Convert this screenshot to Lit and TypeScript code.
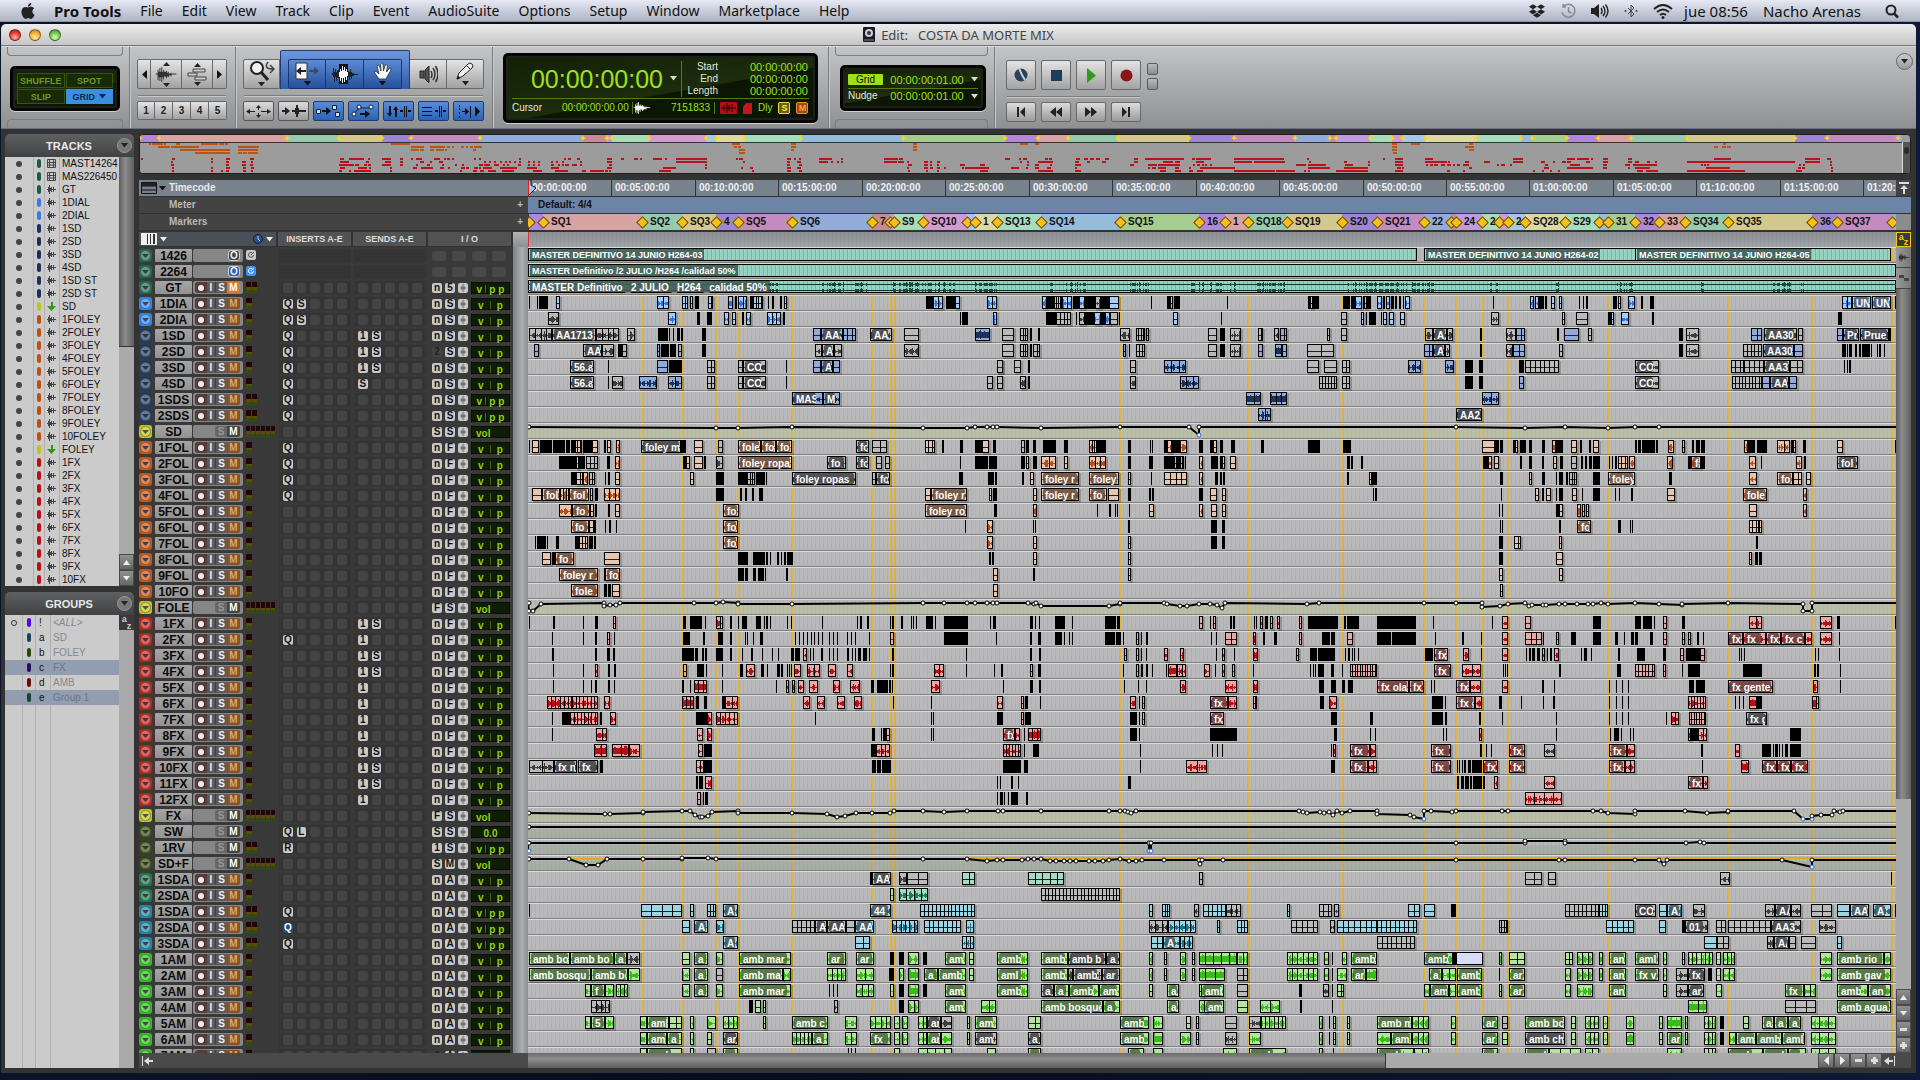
import { LitElement, html, svg, css, nothing } from "lit";
import { customElement } from "lit/decorators.js";
import { classMap } from "lit/directives/class-map.js";
import { styleMap } from "lit/directives/style-map.js";

/* ---------- session data ---------- */

/** Pixel column at which the session starts. */
const START = 528;
const END = 1896;
const FIVE_MINUTES = 83.45;

const MARKER_COLOURS = [
  "#d8a3a3", "#97cbaf", "#d3c98f", "#9e86d0", "#c48bc0", "#93abd8", "#c68c92", "#bf9be3",
  "#a8dcb8", "#d39bcf", "#a5c8ea", "#dcd9a2", "#a6dcc0", "#95bcdb", "#a6cc8f", "#b088d8",
];

const MARKERS: [number, string][] = [
  [543, "SQ1"], [642, "SQ2"], [682, "SQ3"], [716, "4"], [738, "SQ5"], [792, "SQ6"], [872, "7"], [890, ""],
  [894, "S9"], [923, "SQ10"], [967, ""], [975, "1"], [997, "SQ13"], [1041, "SQ14"], [1120, "SQ15"], [1199, "16"],
  [1225, "1"], [1248, "SQ18"], [1287, "SQ19"], [1342, "S20"], [1377, "SQ21"], [1424, "22"], [1451, ""], [1456, "24"],
  [1482, "2"], [1499, ""], [1508, "2"], [1525, "SQ28"], [1565, "S29"], [1599, ""], [1608, "31"], [1635, "32"],
  [1659, "33"], [1685, "SQ34"], [1728, "SQ35"], [1812, "36"], [1837, "SQ37"], [1892, ""],
];
const markerColour = (i: number) => MARKER_COLOURS[i % 16];

interface Track {
  name: string;
  group: string;
  kind: "video" | "audio" | "aux";
  channels: number;
  inserts: string;
  sends: string;
  io: string;
  view: string;
}

/** group colours: [button, clip tint, waveform] */
const GROUPS: Record<string, [string, string, string]> = {
  master: ["#1c6650", "#97d3c3", "#134a3c"],
  dial: ["#2b86f0", "#a9ccf6", "#2474ea"],
  sd: ["#1c3a66", "#8fabdc", "#1b3158"],
  bus: ["#c2c41e", "#c9ccb0", "#666633"],
  foley: ["#c4561a", "#e8c5ae", "#b84c12"],
  fx: ["#c21e16", "#e5aaa5", "#b80f17"],
  verb: ["#33480f", "#b5bda8", "#334411"],
  sda: ["#17794f", "#a3dcc2", "#1a7d56"],
  sdst: ["#1c87a6", "#9bd4e4", "#1d708c"],
  amb: ["#2fc21a", "#b3e5a0", "#38bd18"],
};

/** name|group|kind|channels|inserts|sends|io|view */
const TRACKS: Track[] = `1426|master|video|0||||
2264|master|video|0||||
GT|master|audio|2|||n5|
1DIA|dial|audio|1|QS||nS
2DIA|dial|audio|1|QS||nS
1SD|sd|audio|1|Q|1S|nS
2SD|sd|audio|1|Q|1S|2S
3SD|sd|audio|1|Q|1S|nS
4SD|sd|audio|1|Q|S|nS
1SDS|sd|audio|2|Q||nS
2SDS|sd|audio|2|Q||nS
SD|bus|aux|6|||SS|vol
1FOL|foley|audio|1|Q||nF
2FOL|foley|audio|1|Q||nF
3FOL|foley|audio|1|Q||nF
4FOL|foley|audio|1|Q||nF
5FOL|foley|audio|1|||nF
6FOL|foley|audio|1|||nF
7FOL|foley|audio|1|||nF
8FOL|foley|audio|1|||nF
9FOL|foley|audio|1|||nF
10FO|foley|audio|1|||nF
FOLE|bus|aux|6|||FS|vol
1FX|fx|audio|1||1S|nF
2FX|fx|audio|1|Q|1|nF
3FX|fx|audio|1||1S|nF
4FX|fx|audio|1||1S|nF
5FX|fx|audio|1||1|nF
6FX|fx|audio|1||1|nF
7FX|fx|audio|1||1|nF
8FX|fx|audio|1||1|nF
9FX|fx|audio|1||1S|nF
10FX|fx|audio|1||1S|nF
11FX|fx|audio|1||1S|nF
12FX|fx|audio|1||1|nF
FX|bus|aux|6|||FS|vol
SW|verb|aux|1|QL||SS|0.0
1RV|verb|aux|2|R||1S
SD+F|verb|aux|6|||SM|vol
1SDA|sda|audio|1|||nA
2SDA|sda|audio|1|||nA
1SDA|sdst|audio|2|Q||nA
2SDA|sdst|audio|2|q||nA
3SDA|sdst|audio|2|Q||nA
1AM|amb|audio|1|||nA
2AM|amb|audio|1|||nA
3AM|amb|audio|1|||nA
4AM|amb|audio|1|||nA
5AM|amb|audio|1|||nA
6AM|amb|audio|1|||nA
7AM|amb|audio|1|||2A`
  .split("\n")
  .map((row) => {
    const [name, group, kind, channels, inserts, sends, io, view] = row.split("|");
    return { name, group, kind, channels: +channels, inserts, sends, io, view: view ?? "" } as Track;
  });

/**
 * Clips of each lane. A lane is stored in reels divided by "#"; a reel has its own
 * origin and resolution. A clip is [type]from[-to][/parts][:label].
 *   no type: too short to show its inside, o: quiet, w: loud, g/x: the same but uncoloured,
 *   d: very loud, L/G/D: named clips, S: selected
 */
const CLIPS: Record<number, string> = {
  3: "28;51;57-84;o108-120;w411-446/2;o487-505/2;o510-519;525-537;o564-579/2;w624-640;644-650;w654-681/2;690-698;o700-728/4;745;757-762;780-787;o792-801;1218-1240;w1240-1268/2;1278-1305;o1305-1320;w1401-1431/2#w186-200;200-222;o222-245/4;w245-275/2;278-296;w296-316;316-345;x345-362;364-386;o386-416;514;561-570;o570-578;583-590;592-600;741;984-990;o990-1000;1000-1017;1089-1110;1113-1126;w1126-1146;1148-1152;o1152-1160;1160-1173;w1191-1205;o1208-1216;w1218-1230;1233-1243;o1244-1252;1258-1264;1269;w1275-1290#160;w270-283;w285-298;298-312;315-321;o333-345;o357-366;418;428;438-444;519-532;o534-543;w564-584;603-609;630-642;w1206-1236/2;L1236-1292:UNI;L1295-1352:UNI;1365",
  4: "x84-117;w444-467;531-540;561-576;w612-626;o636-648;666-671;w678-692;w741-782/3;789-795;1320;1326-1344;w1419-1431#198-228;g228-272/4;288;x297-316;316-342;w342-363;363-376;w376-390;g390-414;417;o579-594;724;g1084-1100;o1143-1152;1158;1167-1188;1204;o1208-1222;o1227-1241;o1260-1275#x153-177;o366-375;g408-444;505-512;o512-522;w543-566;636-642;1194-1206",
  5: "x27-95/4;G95-228:AA1713_;x228-296/4;x321-345;g414-420;420-444;447;458-462;470-480;484-489;546-558;o879-903;L903-968:AA3;o968-1008/3;G1050-1115:AA;g1152-1197;d1365-1409#g66-102;g120-144/3;150-156;174-180;x420-450;g468-495/4;o498-507;g684-711;720-735;x750-783;g834-848/2;x882-897;o900-921/2;g1041-1050;g1084-1101;x1335-1358;G1358-1400:AA;x1400-1419#120-126;x198-228;o228-254/2;351-357;o372-416;g444-456;717-729;x738-777;o933-966/2;G972-1070:AA30;g1074-1089;o1191-1210;L1210-1258:Pru;L1260-1346:Prue;o1346-1353",
  6: "o42-57;G189-245:AA;x245-282;294-306;g306-321;o411-420;423-447;450-468;o474-487;546-558;x885-905;G905-942:A;x942-966;x1152-1197#g66-102;g120-144/3;150-156;g160-180/2;o429-438;447;g468-495/3;g684-711;720-735;x750-783;o834-848;d885-905;o905-921;g981-1062/2;o1332-1358/2;L1358-1396:AA;x1396-1410#120-126;x198-220;o220-254/2;g357-369;717-729;x738-777;g909-965/5;L968-1062:AA30;o1062-1089;1206-1217;1220;1228-1236;1244-1252;1256-1262;1267-1290;1294;1310;1318-1324;1333",
  7: "G150-222:56.a;264;o411-444;447-486;g561-585/2;g654-668;G668-738:CO;798;o879-903;L903-940:A;o940-960;g1431-1449#g51-69;g102-123;144-150;g450-468;w552-618/3;g981-1017;g1032-1071;g1086-1110/2;w1284-1323/2;w1395-1422#75-99;117-129;237-252;g256-356/7;G585-657:CO;g873-912/3;g912-972/4;G972-1050:AA30;g1050-1089/2;1213;1221;1228-1234",
  8: "G150-222:56.a;264;x276-309;w357-411;w444-486/2;g561-585/2;g654-668;G668-738:CO;798;g1401-1419#g51-69;x120-138;144-150;x450-468;w600-657/3;g1017-1071/6;g1086-1110/2#75-99;117-129;o237-252;G585-657:CO;g876-965/9;o965-990;L990-1046:AA;o1046-1071",
  9: "L816-908:MAS;L908-960:M#d798-843/2;d870-921/3#w126-177/2",
  10: "#w834-873/2#D48-126:AA2",
  12: "28;o36-58;60-95;98-116;118-135;137-150;152-165;o165-186/3;190-216;o216-234;252-258;o261-272;w288-299;G363-484:foley m;484-498;o522-549;g594-608;L654-722:fole;L722-768:fo;L768-816:fo;G1008-1046:fo;g1057-1101/2;o1215-1245/3;1266-1272;1320-1329;1365-1386;o1386-1407;1419-1428#g123-134;137-146;159-168;189-228;252-264;w327-352/3;352-378;444-453;510;517;552-562;w562-576;576-600;w600-620;657-669;690-699;o699-711;720-729;753-765;843-852;984-997;o997-1001;1001-1020;1089-1113#o126-165;165-176;180-189;219-226;o226-234;240-258;267-276;306-315;w336-348;348-369;o393-411;420-426;446-453;o459-477;585-592;595-603;606-645;648-654;w684-702;g726-735;756-762;768-780;783-795;w912-925;925-945;950-981;w1011-1050/2;1053-1058;o1058-1068;1089-1098;o1191-1209;1365",
  13: "117-167;w167-176;178-195;g198-234/3;261-270;w285-300;489-498;o498-510;o522-549;552-558;x588-609;L654-816:foley ropa;G921-978:fo;G1008-1047:fo;g1068-1087;g1095-1110;1321;1365-1404;1407-1431#123-135;o138-147;159-171;w184-228/2;o252-264;w327-378/3;444-453;507-519;552-582;g582-590;590-600;g600-612/2;616;w657-669;693-714;720-727;o727-736;o750-768;1101-1109;1113-1119;1143-1149#129-145;w145-156;o162-177;240-246;267-276;306-312;o339-351;360-369;g393-411;423-429;435-441;447-455;459-480;508;516-520;524-530;o534-564/3;w567-585;w681-700;744-752;L752-783:fo;783-795;w927-948;964;w1068-1086;1092-1098;G1191-1254:fol",
  14: "153-168;o168-190/2;w190-204;g208-224/2;255;264-270;o285-300;o510-522;588-612;654-680;g680-706/3;708-735;739;G816-1008:foley ropas;g1057-1068;G1068-1110:fo;1317-1329;1404-1422;1425-1431#126-132;o150-162;L184-297:foley r;L327-416:foley;o444-453;514;o552-621/4;w657-669;705-714;720-726;730-736;1101-1107;o1167-1175;1175-1192#180-189;o267-276;306-315;349;357-369;378-384;g387-411/3;459-480;L505-585:foley;687-696;w927-951;L1011-1058:fo;o1058-1086/2;o1098-1113",
  15: "o36-66;L66-120:fol;w120-146/3;L146-206:fol;o210-219;225-234;w252-299/3;588-612;660-666;676-681;696-702;717-729;o1215-1232;L1232-1341:foley r;o1407-1417;1420-1431#o159-171;L184-297:foley r;L327-380:fo;o385-416;444-453;507-513;516-522;657-669;o690-711;o726-738;1179;1186-1191#183;o285-296;306-312;o318-333;348;357-369;o396-411;426;459-480;526;537;573-579;o681-704;L909-981:fole;w1089-1101",
  16: "w117-157;L157-210:fo;o210-222;225-231;264-270;o285-300;L609-657:fo;L1215-1341:foley ro;1422-1431#w159-171;351;387-393;405;411;447;o507-522;w657-669;o693-711;o726-738#178;185;348-356;o356-369;w411-422;o426-435;o438-447;o927-951;w1089-1101",
  17: "L153-206:fo;o206-222;222-228;255;267-272;288;L609-654:fo;1335;w1401-1419#160;166;444-450;693-711;726-736#180;186;357-363;L411-453:fo;534-543;570;576;o927-957/3;o957-966",
  18: "45-48;51-62;64-78;82;108-117;165-178;o178-204/3;208-219;222-228;L609-654:fo;w1401-1419#o159-171;o444-453;693-711;726-736#177-189;o222-243/2;o357-366;948-954",
  19: "o66-93;96-106;L106-161:fo;o252-299;654-684;699-735;738-744;750;771-776;783;792-797;801-819;1407-1413;1416-1422#o159-171;o444-453#177-189;o348-369;o927-936;945-953;957-966",
  20: "L117-234:foley r;252-256;L256-300:fo;654-672;675-684;699-708;714-732;736;798-804;o1419-1433#159-165;o444-453#o177-189;o357-369",
  21: "L153-234:fole;252-261;264-273;o276-300;o1419-1434##o180-189",
  23: "20;74-78;140;168-175;o208-215;365-371;381-408;415;w440-454/2;470-475;488;497-508;529-540;546-549;552-556;560;597;606;677;755;761-765;777-781;829;834-838;853-859;875;880;886;909-913;915-926;930;950-1003;1052-1055;1060-1067;1142-1150;1154;1162;1198-1221;1236;1310-1336;1338-1345;o1522-1530#22;o28-35;65-69;72-76;118;123;w131-137;141-148;g152-160;w168-175;w216-223;235-301;314-318;321-346;386-470;508;637;w658-670;o708-720;856-873;947-961;965-984;988;o1008-1017;1050-1057;w1196-1223/2;w1350-1376;1387-1394;1514",
  24: "72;140;168-172;o195-202;211;365-380;410-414;444-454;470-475;504;508;522;538-544;616;625;634;643;651;659;668;676;692;702;711;733;741;751;781;w829-837;950-1004;1066;1142-1147;1160-1166;1198-1215;1218;1230;1236;1310-1332;1334-1346;1351;w1380-1386;1390;1402-1407#24;35;o55-80/2;w115-122;137-141;161-168;w216-223;266-284;286-293;o320-333;386-416;418-470;512;o571-576;611;w658-670;o708-745/3;747;o776-782;808-819;856-873;904-910;924;938-945;947-953;981-987;o1008-1017;o1050-1056;o1063-1070;1082-1087;1096;L1151-1182:fx;L1182-1232:fx;L1232-1265:fx;L1265-1318:fx c;w1318-1333;w1350-1376;1392",
  25: "72-76;168-173;195-201;208-213;363-390;393-399;408-412;415-419;440-455;470-475;498;517-521;541;565;578;608-614;616-628;w634-642;650;656;674-679;692;702;711;733-737;743;750;757-764;768-778;781;833-838;998;1142-1147;1163-1168;o1352-1359;w1380-1386;1390;1403;w1443-1451;w1478-1487#35;w49-55;74;w115-127;o208-216;240-254;257-294;316;322-326;330;336;344;490-508;L510-540:fx;w573-586;611;w658-670;711;716-720;724-730;734-740;w745-751;756;762-766;w772-782;830;837-842;852;911-915;952-970;1008-1016;o1046-1055;1058-1090;o1090-1099;1173;1179;1185;1340;1347;1391",
  26: "74;141;w168-174;196-201;211-214;o365-373;396-413;416;453;493-500;w506-527;540-546;554;575-582;o585-590;597;602;607;w613-629;w642-672/2;w690-708;w732-747;829;834-837;w927-949/2;1000;1061;1077-1081;o1142-1148;1160-1166;1351;w1380-1386;1391-1395;1403-1407;1416;1447;d1452-1472;w1472-1491/2#w8-21;33;w47-55;w69-77;116;240;246;251;257-270;285-292;309;o327-385/11;L510-547:fx;w571-613/2;659;664;669;w782-787;908-918;o948-990/6;o1008-1016;1050;1063-1090;1183-1224;1337-1341;1344-1348;1395",
  27: "74;141;160;168-173;196-201;211;363-367;380;d389-419/3;453;574;w596-602;w609-617;w623-637;w648-667;w701-716;w739-761;787-792;799-824;827-831;834;w921-940;1082;1142-1148;o1162-1168;1352;1384;1403;w1478-1491#w55-80;w115-127;259-270;285-297;309-315;322-333;L386-455:fx ola;L455-488:fx;504;510;L558-588:fx;w588-613;w658-670;745-749;771-774;890;905;919;932;1065-1076;1080-1099;L1151-1249:fx gente;w1336-1347;1395",
  28: "w60-116/6;w116-174/7;w189-201;d363-390/3;394-401;412-418;452-460;w460-488/2;w634-650;w665-684;w710-728;w748-766;836;920;w1068-1082;o1122-1128;1132-1138;1164;w1366-1380;1387;w1393-1400#L22-62:fx;w62-80;o115-125/2;261-270;w281-298;505-529;534;L558-600:fx c;w600-614;651-658;700;746;768-773;890;905;919;932;w1063-1103/6;1166;1173;1183;d1196-1214;1214-1224;w1333-1349/2",
  29: "72;93-112;w112-174/8;180-184;w202-214;394-418;w418-429;w440-488/5;660;920;926;1068-1083;o1122-1128;1132-1145;1366-1382;1387;w1393-1399#L22-53:fx;285-298;370-377;505-529;533-538;w608-613;657;776;890;905;919;932;1014;w1025-1044/2;o1065-1103/7;G1189-1236:fx g",
  30: "72;w170-195/2;w396-411;w418-429;788-795;809;814-820;o820-828;920;926;L1082-1108:fx;w1108-1121;1130;d1138-1166/3;1366-1382;1387#22-80;292-298;371;381;530;536;w608-615;776;893;902-912;917;937;942;w1063-1070;1070-1084;w1084-1104/2;1285-1309",
  31: "d165-195/2;d206-244/2;w244-268;w399-411;413-430;787-797;w797-828/3;w1082-1122/6;1130;1149-1163;1388#27;38;47;285;w290-297;L327-370:fx;w370-384;L504-546:fx;w610-614;622-626;634;L672-707:fx;x749-774;L890-930:fx;w930-947;1091-1095;w1166-1177;1224-1244;1247;1253-1258;1262;1268;1275-1280;1284-1309",
  32: "x20-77/2;G77-127:fx n;G130-174:fx;180-186;w394-413/2;413-430;788-797;799-808;810-830;1082-1122;1129-1138;1388;w1492-1538/2#285-294;L327-366:fx;w366-385/2;L504-546:fx;559;564;571;576-580;584-590;593-614;L616-650:fx;L672-707:fx;L890-926:fx;w926-947/2;1093;d1178-1196;D1224-1256:fx;D1256-1288:fx;D1288-1324:fx",
  33: "394-399;401-410;w414-430;1069;1075;1100-1104;1116;1362-1369#560-565;568-574;577-586;588-592;595-614;o616-621;w640-650;w749-774;L1063-1096:fx;w1096-1106",
  34: "o396-405;410;415-420;1069;1076-1081;1084;1094;1100-1115;1133-1137#w708-788/4",
  39: "785-788;G788-832:AA;x848-866;g866-915/2;o989-1019/2;o1138-1218/5;g1520-1529#g708-745/2;g757-775;x1132-1155;1506;1515",
  40: "w829-837;w848-915/4;g1167-1343/22#",
  41: "20;o271-362/4;o381-390;o419-438/3;L455-488:A;L783-831:44;o896-1019/14;o1409-1417;o1438-1457/3;x1510-1522#o7-56/5;x56-89/3;o190-197;g259-287/3;x291-302;o453-480/2;o488-511;547-558;g795-870/8;o870-888/3;G948-994:CO;o1000-1018;L1018-1049:A;x1074-1099;x1230-1252;G1252-1288:AA;x1288-1308;g1331-1376/2;o1387-1415;L1415-1458:AA;L1466-1505:A;1514",
  42: "o363-380;L390-422:A;w438-456;g609-660/5;G660-688:A;G688-730:AA;g730-750;L750-792:AA;w834-892/6;o904-987/8;w1000-1018;x1408-1452/3;w1452-1514/5#o37-43;o81-105/3;g198-258/5;x284-293;o299-385/7;o385-473/9;g651-670/4;o884-946/5;o1000-1016;1050-1056;G1056-1106:01;g1124-1145/2;g1151-1243/7;G1243-1308:AA3;x1348-1386",
  43: "L455-488:A;o751-783/2;w989-1018/3;o1413-1440/2;L1440-1478:A;w1478-1508/3#g386-468/8;o1098-1125;g1125-1153/2;x1235-1250;G1250-1282:AA;g1282-1297;g1309-1341;o1387-1398",
  44: "L20-112:amb bo;L112-210:amb bo;L210-240:a;x240-268;o363-380;L390-422:a;w439-454;L490-608:amb mar;L688-730:ar;L753-792:ar;829-837;849-860;w868-893;903-911;L951-1000:am;o1006-1018;L1069-1138:amb;L1167-1228:amb;G1228-1312:amb b;G1312-1343:a;w1409-1417;o1443-1449;w1478-1491;o1506-1513;d1522-1568/2#d10-80/4;w80-105/2;w190-258/6;w269-280;287;w309-320;L328-385:amb;L488-550:amb;550-558;S558-616;w651-657;o672-707/2;o795-813/2;w821-856/3;w870-878;L890-928:am;L948-999:aml;w1008-1017;o1050-1056;w1063-1117/6;w1124-1135;w1139-1165/3;w1350-1376;L1387-1490:amb rio;w1490-1505",
  45: "L20-160:amb bosqu;L160-242:amb bo;w242-268;w363-380;L390-422:a;g439-454;L490-588:amb mar;w588-608;w688-730/4;w753-792/2;827-838;w849-860;d868-893;L904-936:a;L936-1000:amb;o1006-1018;L1069-1138:aml;L1167-1228:amb;x1228-1238;G1238-1304:amb;G1304-1343:ar;w1409-1417;o1443-1449;w1478-1491;o1506-1513;d1522-1568/2#d10-54/2;g81-105/2;w190-258/6;w269-280;287;w299-320;L328-362:ar;d362-385;L498-526:a;w526-557/2;L559-614:amb;651;L672-707:ar;w795-807;w821-856/3;w870-878;L890-928:am;L948-999:fx v;w1008-1017;x1037-1063;G1063-1099:fx;1106-1115;w1124-1135;w1139-1165/2;w1350-1376;L1387-1505:amb gav",
  46: "w146-160;L160-190:f;w190-210;w215-241/3;w363-380;L390-422:a;w439-454;L490-608:amb mar;692;702;711;w753-792/3;w829-837;849-860;d868-893;903-911;L951-1000:am;L1069-1138:amb;G1167-1196:a;L1196-1230:a;L1230-1296:amb;L1296-1343:am;o1409-1417;L1450-1477:a;o1522-1532#L2-53:amb;g81-105;216-223;x268-280;287;o299-313/2;w488-500;L500-542:am;w542-557;L559-614:amb;o651-657;L672-707:ar;w795-807;w821-856;L890-928:an;o1008-1017;x1037-1063;G1063-1097:ar;w1124-1137;L1274-1316:fx;w1316-1341/2;L1387-1455:amb;L1455-1505:an",
  47: "x160-201/4;513-522;o526-539;o544-551;x703-712;849-860;w868-893/2;L951-1000:am;w1033-1067/2;L1167-1306:amb bosque;L1306-1343:a;L1450-1477:a;w1522-1538#L8-53:am;o81-105;w131-175/2;o218-223;287;d1063-1105/2;g1274-1341/3;L1387-1505:amb agua",
  48: "w146-160;L160-190:5;w190-210;w268-284;L284-334:aml;o334-362/2;w381-390;w419-438;w455-488/3;o544-551;L609-691:amb c;w729-754;w783-832/4;w837-852;w856-868;w892-911/2;G911-942:ar;x942-967;o1002-1009;L1020-1068:am;o1138-1166/2;D1345-1408:amb;w1418-1441;o1492-1504;o1514-1521#g54-80;x106-132;w132-188/6;w259-267;282;o290-297;o320-327;L386-462:amb m;w462-498/3;w547-557;L615-650:ar;g658-670;L708-796:amb bo;o808-820;w838-868/3;w878-888;w928-946;w1000-1008;d1017-1049;w1056-1063;w1098-1124/3;1132-1142;o1183-1195;L1224-1250:a;L1250-1280:a;L1280-1308:a;w1330-1386/3",
  49: "w268-284;L284-330:am;L330-362:a;w381-390;o419-429;G455-488:ar;w609-655/5;L655-691:a;w729-754/2;L783-832:fx;w837-852;w856-868;w892-911/2;L911-944:ar;w944-967;o1002-1009;G1020-1068:am;G1138-1166:a;L1345-1408:amb;d1418-1441;w1478-1504;o1514-1521#x54-80;w106-132;w259-267;282;o290-297;o320-327;w386-415;L415-462:amb;w462-498/3;w547-557;L615-650:ar;o658-670;G708-796:amb ch;o808-820;w838-868/3;w878-888;d928-946;o1000-1008;L1017-1049:am;o1056-1063;w1098-1124/3;1132-1142;w1152-1168;L1168-1210:am;L1210-1268:amb;L1268-1318:aml;w1330-1386/3",
  50: "w268-284;L284-362:amb;w381-390;g419-438;L455-488:a;735;742;750;w837-852;w892-967/4;o1047-1067;L1138-1166:a;L1362-1398:a;w1418-1441#w50-80;L106-188:amb;w259-267;290;L386-466:amb;w466-498/2;L615-650:a;L708-760:amb;w760-830/3;w838-868/2;w1017-1049;w1098-1124/3;L1150-1226:amb;L1226-1280:amb;L1280-1320:a;w1330-1386/3",
};

interface Clip {
  type: string;
  x: number;
  w: number;
  parts: number;
  label: string;
}

const REELS: Record<number, [number, number][]> = {
  3: [[520, 3], [980, 3], [1440, 3]],
  2: [[520, 2.24], [1200, 2.178]],
};

const readLane = (source = ""): Clip[] =>
  source.split("#").flatMap((reel, i, all) => {
    if (!reel) return [];
    const [origin, scale] = REELS[all.length][i];
    const at = (v: string) => Math.round(origin + +v / scale) - START;
    return reel.split(";").map((item) => {
      const m = /^([a-zA-Z]?)(\d+)(?:-(\d+))?(?:\/(\d+))?(?::(.*))?$/.exec(item)!;
      const x = at(m[2]);
      return { type: m[1] || "k", x, w: m[3] ? Math.max(1, at(m[3]) - x) : 1, parts: +(m[4] ?? 1), label: m[5] ?? "" };
    });
  });
const LANES: Clip[][] = TRACKS.map((_, i) => readLane(CLIPS[i]));

/** Volume automation, as x,level breakpoints. */
const AUTOMATION: Record<number, string> = {
  11: "528,4 716,5 738,5 792,4 923,5 967,5 975,4 987,4 993,4 997,4 1041,5 1120,4 1189,4 1199,12 1199,4 1456,4 1525,5 1565,4 1608,5 1635,4 1659,4",
  22: "528,4 529,12 533,12 541,5 604,4 604,7 610,6 616,6 620,4 694,4 716,4 723,3 738,4 738,5 792,5 923,4 944,4 967,4 975,4 987,4 993,4 997,4 1028,4 1034,5 1036,4 1041,7 1109,7 1120,5 1120,4 1164,4 1167,5 1180,7 1187,7 1199,5 1210,5 1217,6 1222,9 1225,4 1307,5 1319,4 1424,4 1456,4 1482,4 1482,8 1500,7 1508,5 1525,4 1529,7 1532,6 1543,6 1546,6 1559,5 1565,5 1577,5 1588,5 1593,5 1601,4 1608,5 1635,4 1659,5 1682,6 1682,5 1728,4 1803,5 1803,12 1812,12 1812,4",
  35: "528,6 605,7 610,7 643,6 643,5 682,4 690,4 695,8 700,10 702,10 708,9 712,5 738,4 738,6 792,6 827,7 837,10 845,9 856,6 872,6 890,6 894,4 923,4 944,5 967,4 998,4 1003,4 1041,4 1109,4 1120,4 1125,4 1128,5 1131,6 1136,4 1299,4 1303,5 1307,6 1320,5 1324,6 1329,5 1333,8 1337,4 1342,6 1350,4 1377,4 1377,7 1410,8 1414,10 1424,12 1424,4 1431,4 1452,5 1456,4 1502,4 1508,4 1593,4 1601,4 1608,6 1635,7 1635,4 1685,4 1707,6 1728,5 1728,4 1794,4 1803,12 1812,12 1812,9 1821,8 1832,8 1834,4 1840,5 1843,4",
  36: "528,4",
  37: "528,12 528,4 1149,4 1149,12 1151,12 1151,4 1456,4 1525,4 1525,2 1565,2 1565,4 1686,4 1700,3 1704,4",
  38: "528,4 569,4 586,10 598,10 607,4 643,4 682,4 682,3 708,3 716,4 923,4 967,4 987,6 997,5 1003,5 1022,5 1028,4 1034,4 1041,4 1050,6 1056,6 1064,6 1070,6 1076,6 1089,6 1095,6 1103,6 1109,5 1120,4 1129,6 1136,6 1142,5 1164,5 1199,5 1200,9 1202,5 1223,5 1456,5 1559,5 1565,5 1635,5 1659,5 1664,9 1667,5 1782,5 1812,12 1812,5",
};

const SIDE_TRACKS: [string, string, string][] = [
  ["MAST14264", "#1c5a46", "film"], ["MAS226450", "#1c5a46", "film"], ["GT", "#1c5a46", "wave"],
  ["1DIAL", "#3a78ee", "wave"], ["2DIAL", "#3a78ee", "wave"],
  ...["1SD", "2SD", "3SD", "4SD", "1SD ST", "2SD ST"].map((n) => [n, "#1c2f5c", "wave"] as [string, string, string]),
  ["SD", "#bcc41e", "bus"],
  ...Array.from({ length: 10 }, (_, i) => [`${i + 1}FOLEY`, "#c04f14", "wave"] as [string, string, string]),
  ["FOLEY", "#bcc41e", "bus"],
  ...Array.from({ length: 10 }, (_, i) => [`${i + 1}FX`, "#bd0d14", "wave"] as [string, string, string]),
];

const MIX_GROUPS: [string, string, string][] = [
  ["!", "<ALL>", "#5a00ee"], ["a", "SD", "#17455c"], ["b", "FOLEY", "#2a4a0c"],
  ["c", "FX", "#2c0a5c"], ["d", "AMB", "#6e0808"], ["e", "Group 1", "#17452c"],
];

/* ---------- drawing helpers ---------- */

const wavePath = (x: number, w: number, middle: number, peak: number) => {
  let d = "";
  for (let i = 0; i < w; i++) {
    const n = Math.abs(Math.sin((x + i) * 12.9898) * 43758.5453) % 1;
    const h = Math.round(n * peak * Math.abs(Math.sin((i + 1) * 0.6 + x)));
    d += `M${x + i} ${middle - h}h1v${2 * h + 1}h-1z`;
  }
  return d;
};

const drawClip = (clip: Clip, group: string) => {
  const { type, x, w, parts, label } = clip;
  if (type === "k" || w < 3) return svg`<rect x=${x} y="1" width=${w} height="13" />`;
  const [, tint, strong] = GROUPS[group];
  const grey = "gxG".includes(type);
  const fill = type === "S" ? "#d9dcf8" : grey ? "#bababa" : tint;
  const ink = grey ? "#3c3c3c" : strong;
  const inner = w - 2;
  const splits = [];
  for (let i = 1; i < parts; i++) splits.push(`M${x + Math.round((w * i) / parts)} 1h1v13h-1z`);
  const labelWidth = Math.min(inner - 2, label.length * 6 + 4);
  return svg`
    <rect x=${x + 1} y="2" width=${w + 1} height="14" fill="#0003" />
    <rect x=${x} y="1" width=${w} height="13" />
    <rect x=${x + 1} y="2" width=${inner} height="11" fill=${fill} />
    ${
      type === "S"
        ? nothing
        : "dD".includes(type)
          ? svg`<path d=${wavePath(x + 1, inner, 7, 5) + `M${x + 1} 5h${inner}v6h${-inner}z`} fill=${ink} />`
          : "wxLG".includes(type)
            ? svg`<path d=${wavePath(x + 1, inner, 8, 4)} fill=${ink} />`
            : svg`<rect x=${x + 1} y="8" width=${inner} height="1" fill="#222" />`
    }
    ${splits.length ? svg`<path d=${splits.join("")} />` : nothing}
    ${
      label
        ? svg`<svg x=${x + 2} y="2" width=${labelWidth} height="12">
            <rect width="100%" height="11" rx="2" fill=${grey ? "#4a4a4aee" : `color-mix(in srgb, ${strong} 22%, #55504cdd)`} />
            <text class="clip-name" x="2" y="10">${label}</text>
          </svg>`
        : nothing
    }`;
};

const MARKER_LINES = MARKERS.map(([x]) => `M${x - START} 0h1v16h-1z`).join("");

const drawVideoClip = (from: number, to: number, name: string, labelWidth: number) => svg`
  <rect x=${from - START} y="1" width=${to - from} height="13" />
  <rect x=${from - START + 1} y="2" width=${to - from - 2} height="11" fill="#97d3c3" />
  <rect x=${from - START + 1} y="2" width=${to - from - 2} height="11" fill="url(#grid-teal)" />
  <rect x=${from - START + 2} y="2" width=${labelWidth} height="11" fill="#48675f" />
  <rect y="14" width=${END - START} height="1" fill="#c8a44c" />
  <text class="video-name" x=${from - START + 4} y="11">${name}</text>`;

const drawAutomation = (index: number) => {
  const points = AUTOMATION[index].split(" ").map((p) => p.split(",").map(Number));
  let d = "";
  points.forEach(([x, y], i) => {
    const px = x - START;
    d += i ? `L${px} ${y}` : `M${px} ${y}`;
  });
  d += `H${END - START}`;
  return svg`
    <rect y="6" width="100%" height="9" fill=${index >= 36 ? "#8c9c7c55" : "#c4cc7c4c"} />
    ${
      index === 38
        ? svg`<path d="M42 3h36v2H42zM115 2h39v2h-39zM440 2H1368v2H440z" fill="#e5a912" />`
        : nothing
    }
    <path d=${d} fill="none" stroke="#000" stroke-width="2" />
    ${points.map(
      ([x, y]) => svg`<circle cx=${x - START + (x === START ? 1 : 0)} cy=${y} r="2" fill="#fff"
        stroke=${y === 12 && index !== 22 ? "#2a5ce0" : "#000"} />`
    )}`;
};

const laneContent = (track: Track, index: number) => {
  if (index === 0)
    return svg`${drawVideoClip(528, 1417, "MASTER DEFINITIVO 14 JUNIO H264-03", 174)}
      ${drawVideoClip(1424, 1636, "MASTER DEFINITIVO 14 JUNIO H264-02", 174)}
      ${drawVideoClip(1635, 1891, "MASTER DEFINITIVO 14 JUNIO H264-05", 174)}`;
  if (index === 1) return drawVideoClip(528, 1896, "MASTER Definitivo /2 JULIO /H264 /calidad 50%", 208);
  if (index === 2) {
    const bursts: [number, number][] = [
      [770, 10], [820, 6], [826, 20], [855, 12], [893, 20], [905, 18], [925, 10], [935, 22], [975, 22], [1050, 6], [1066, 12],
      [1080, 8], [1130, 14], [1145, 4], [1190, 14], [1210, 12], [1230, 6], [1257, 28], [1348, 60], [1410, 20], [1428, 6],
      [1490, 8], [1555, 4], [1617, 16], [1700, 4], [1773, 20], [1800, 4],
    ];
    return svg`${drawVideoClip(528, 1896, "", 240)}
      <path d="M0 5h1368v1H0zM0 11h1368v1H0z" fill="#10362c" />
      <path fill="#134a3c" d=${bursts.map(([x, w]) => wavePath(x - START, w, 5, 2) + wavePath(x - START, w, 11, 2)).join("")} />
      <rect x="2" y="2" width="238" height="11" fill="#48675fcc" />
      <text class="clip-name" x="4" y="12">MASTER Definitivo _2 JULIO _H264 _calidad 50%</text>`;
  }
  if (AUTOMATION[index]) return drawAutomation(index);
  return LANES[index].map((clip) => drawClip(clip, track.group));
};

/* overview strip: the whole session, a band of eleven tracks at three pixels each */
const overviewX = (x: number) => Math.round((x - START) * 1.289);
const overview = () => {
  const bands = [];
  for (let i = 18; i <= 28; i++) {
    const d = LANES[i]
      .map((c) => {
        const w = Math.max(2, Math.round(c.w * 1.289));
        return `M${overviewX(c.x + START)} ${(i - 18) * 3}h${w}v2h${-w}z`;
      })
      .join("");
    if (d) bands.push(svg`<path d=${d} fill=${i < 22 ? "#bd5417" : "#bb1219"} />`);
  }
  return bands;
};

const icon = (w: number, h: number, body: unknown) =>
  html`<svg class="icon" width=${w} height=${h} viewBox="0 0 ${w} ${h}" aria-hidden="true">${body}</svg>`;

const waveIcon = (fill: string, w = 22, h = 16) => html`<svg class="icon" width=${w} height=${h} viewBox="0 0 22 16" aria-hidden="true">
  <path fill=${fill} d="M0 7h2V3h1v2h1V1h1v4h1V0h1v5h1V3h1v2h2V4h1v2h1V5h1v2h2V6h1v1h5v1h-5v2h-1V9h-2v2h-1v-1h-1v2h-1v-2H9v3H8v-2H7v5H6v-5H5v4H4v-4H3v3H2V8H0z" />
</svg>`;
const down = (fill = "#222") => icon(7, 5, svg`<path d="M0 0h7L3.500 4.500z" fill=${fill} />`);

@customElement("app-root")
export class AppRoot extends LitElement {
  static styles = css`
    :host {
      display: block;
      font-family: "Liberation Sans", Arial, sans-serif;
      font-size: 10px;
      line-height: 12px;
      color: #ddd;
    }
    * { box-sizing: border-box; }
    button {
      font: inherit;
      color: inherit;
      padding: 0;
      margin: 0;
      border: 0;
      background: none;
      display: inline-flex;
      align-items: center;
      justify-content: center;
    }
    ul { list-style: none; margin: 0; padding: 0; }
    h1, h2 { margin: 0; font-size: inherit; font-weight: inherit; }
    svg { display: block; }
    .icon { flex: none; }
    .defs { position: absolute; }
    .desktop {
      height: 100vh;
      display: flex;
      flex-direction: column;
      background:
        radial-gradient(circle, #9fb4d8 0 1px, #0000 1px) 40px 4px / 173px 61px,
        radial-gradient(circle, #5c7198 0 1px, #0000 1px) 11px 29px / 97px 43px,
        linear-gradient(90deg, #0c1428, #070c1c 40%, #0e1a38);
      overflow: hidden;
    }

    /* system menu */
    .menubar {
      height: 22px;
      flex: none;
      display: flex;
      align-items: center;
      padding: 0 20px;
      background: linear-gradient(#e6e9f3, #c9cedc 50%, #b0b5c4);
      border-bottom: 1px solid #8d92a2;
      font-family: "Noto Sans", "Open Sans", sans-serif;
      font-size: 14px;
      line-height: 20px;
      color: #111;
    }
    .menus { display: flex; align-items: center; gap: 19px; margin-left: 18px; }
    .menus .app { font-size: 15px; font-weight: 700; }
    .status { margin-left: auto; display: flex; align-items: center; gap: 15px; font-size: 15px; }
    .status .clock { margin-left: -4px; }

    /* window */
    .window {
      flex: 1;
      min-height: 0;
      margin: 2px 4px 7px 1px;
      display: flex;
      flex-direction: column;
      background: #333;
      border-radius: 5px 5px 0 0;
      overflow: hidden;
    }
    .titlebar {
      height: 22px;
      flex: none;
      display: grid;
      grid-template-columns: 1fr auto 1fr;
      align-items: center;
      background: linear-gradient(#ececec, #c6c6c6);
      border-bottom: 1px solid #777;
      font-family: "Noto Sans", "Open Sans", sans-serif;
      font-size: 13px;
      line-height: 18px;
      color: #444;
    }
    .lights { display: flex; gap: 8px; padding-left: 8px; }
    .light { width: 12px; height: 12px; border-radius: 50%; border: 1px solid #0006; }
    .light.red { background: radial-gradient(circle at 50% 75%, #ffb0a5, #e0342c 60%, #8c1a16); }
    .light.amber { background: radial-gradient(circle at 50% 75%, #fff0a0, #f0a82c 60%, #9c6414); }
    .light.green { background: radial-gradient(circle at 50% 75%, #d8ffb0, #6cc048 60%, #33701c); }
    .title { display: flex; align-items: center; gap: 6px; }
    .title span { white-space: pre; }

    /* toolbar */
    .toolbar {
      height: 83px;
      flex: none;
      display: flex;
      background: linear-gradient(#c3c4c6, #a6a7a9 55%, #8f9092);
      border-top: 1px solid #d8d8e4;
      border-bottom: 1px solid #6d6f84;
    }
    .cluster {
      border-right: 1px solid #7c7d80;
      box-shadow: 1px 0 #c8c8ca;
      display: flex;
      flex-direction: column;
      flex: none;
    }
    .cluster.padded { padding: 12px 8px 0 7px; }
    .tab { height: 9px; margin: 0 6px; border: 1px solid #7c7d80; border-top: 0; border-radius: 0 0 4px 4px; }
    .tab.low { border-top: 1px solid #7c7d80; border-bottom: 0; border-radius: 4px 4px 0 0; margin-top: auto; }
    .rule { height: 1px; background: #7a7b7d; box-shadow: 0 1px #c8c8c8; margin: 6px 1px 5px; }
    .row { display: flex; }
    .lcd {
      border: 3px solid #050505;
      border-radius: 5px;
      background: linear-gradient(170deg, #122005, #1d2c0d 55%, #0c1703 56%, #0a1402);
      box-shadow: inset 0 0 0 2px #1d1f19, 0 1px #d0d0d0;
      color: #9ee01b;
    }
    .modes {
      width: 110px;
      height: 45px;
      margin: 10px 9px 0;
      padding: 4px;
      display: grid;
      grid-template-columns: 1fr 1fr;
      gap: 1px;
      font-size: 9px;
      font-weight: 700;
    }
    .mode { border: 1px solid #35540d; background: #182a07; color: #6d9c1d; }
    .mode.on { background: #3c8ee0; color: #0b2a52; border-color: #3c8ee0; gap: 4px; }
    .key {
      height: 30px;
      background: linear-gradient(#e4e4e4, #a2a2a2);
      border: 1px solid #68696b;
      border-left-width: 0;
      color: #222;
      flex-direction: column;
      gap: 1px;
    }
    .key:first-child { border-left-width: 1px; border-radius: 2px 0 0 2px; }
    .key:last-child { border-radius: 0 2px 2px 0; }
    .key.arrow { width: 14px; }
    .key.zoom { width: 31px; }
    .key.preset { width: 18px; height: 19px; font-weight: 700; }
    .key.tool { width: 37px; }
    .smart {
      height: 39px;
      margin-top: -9px;
      padding: 8px 7px 0;
      display: flex;
      background: linear-gradient(#6f97dc, #2e5aa8);
      border: 1px solid #1f3c78;
      border-bottom: 0;
      border-radius: 2px 2px 0 0;
    }
    .smart .key { width: 38px; background: linear-gradient(#5c8ad4, #24509c); border-color: #19376c; }
    .minis { display: flex; gap: 4px; }
    .mini {
      width: 31px;
      height: 20px;
      border: 1px solid #55565a;
      border-radius: 2px;
      background: linear-gradient(#dcdcdc, #9a9a9a);
    }
    .mini.on { background: linear-gradient(#5c8cd8, #2b62b4); border-color: #1c3c74; }
    .counter {
      width: 315px;
      height: 70px;
      margin: 6px 10px 0;
      padding: 3px 6px;
      display: flex;
      flex-direction: column;
    }
    .counter .upper { flex: 1; display: flex; border-bottom: 1px solid #567a14; }
    .big { flex: 1; display: flex; align-items: center; justify-content: flex-end; gap: 7px; padding-right: 4px; font-size: 25px; line-height: 30px; }
    .select { width: 128px; margin: 2px 0 1px; padding-right: 1px; border-left: 1px solid #567a14; display: grid; grid-template-columns: 36px 1fr; align-content: space-between; }
    .select span { text-align: right; color: #e4e8dc; }
    .select output { text-align: right; font-size: 11px; }
    .lower { height: 18px; display: flex; align-items: center; }
    .lower .name { color: #e4e8dc; width: 50px; }
    .lower .pos { width: 71px; border-right: 1px solid #567a14; }
    .lower .samples { width: 64px; text-align: right; padding-right: 4px; border-right: 1px solid #567a14; margin-right: 5px; }
    .lower .row { gap: 6px; align-items: center; }
    .badge { width: 12px; height: 12px; border-radius: 2px; font-weight: 700; font-size: 9px; border: 1px solid #f0d83c; background: #6b6011; color: #f8e858; }
    .badge.mute { border-color: #f08a2c; background: #a04c10; color: #f8a050; }
    .grid-box { width: 146px; height: 46px; margin: 9px 8px 0 11px; padding: 4px 5px; display: flex; flex-direction: column; }
    .grid-box div { flex: 1; display: flex; align-items: center; justify-content: space-between; }
    .grid-box div:first-child { border-bottom: 1px solid #567a14; }
    .grid-box .tag { width: 35px; height: 11px; border-radius: 1px; background: #9ee01b; color: #111; }
    .grid-box .plain { width: 35px; color: #e4e8dc; }
    .grid-box output { font-size: 11px; }
    .transport { display: grid; grid-template-columns: repeat(4, 30px) 12px; column-gap: 5px; padding: 13px 11px 0; align-content: start; flex: 1; border: 0; }
    .transport .wide { grid-column: 1 / 5; }
    .transport .key, .transport .mini { border: 1px solid #68696b; border-radius: 2px; width: 30px; }
    .leds { display: flex; flex-direction: column; justify-content: space-between; padding: 3px 0 0 1px; }
    .led { width: 11px; height: 12px; border: 1px solid #58595b; border-radius: 2px; background: linear-gradient(#bbb, #8b8b8b); }
    .round { border-radius: 50%; width: 17px; height: 17px; border: 1px solid #666; background: linear-gradient(#ccc, #999); flex: none; }
    .toolbar > .round { margin: 6px 3px 0; }

    /* body */
    .body { flex: 1; min-height: 0; display: flex; padding: 5px 5px 5px 4px; gap: 5px; }
    .side { width: 129px; flex: none; display: flex; flex-direction: column; gap: 6px; }
    .panel { display: flex; flex-direction: column; }
    .panel.fill { flex: 1; min-height: 0; }
    .panel-head {
      height: 23px;
      display: flex;
      align-items: center;
      padding: 0 2px 0 16px;
      background: linear-gradient(#5e6062, #3f4143);
      border-radius: 5px 5px 0 0;
      font-size: 11px;
      font-weight: 700;
      color: #e8e8e8;
    }
    .panel-head h2 { flex: 1; text-align: center; }
    .panel-head .round { width: 15px; height: 15px; background: #777; border-color: #999; }
    .panel-body { display: flex; flex: 1; min-height: 0; }
    .list { width: 114px; color: #111; background: linear-gradient(90deg, #cbcbcb 28px, #b0b0b0 28px 29px, #cbcbcb 29px 39px, #b0b0b0 39px 40px, #cbcbcb 40px 54px, #b0b0b0 54px 55px, #cbcbcb 55px); }
    .list li { height: 13px; display: flex; align-items: center; }
    .dot { width: 6px; height: 6px; border-radius: 50%; background: #444; margin: 0 15px 0 11px; }
    .chip { width: 4px; height: 9px; border-radius: 2px; margin-right: 6px; }
    .list .icon { margin-right: 6px; }
    .list.groups { background: linear-gradient(90deg, #cbcbcb 17px, #b0b0b0 17px 18px, #cbcbcb 18px 30px, #b0b0b0 30px 31px, #cbcbcb 31px 45px, #b0b0b0 45px 46px, #cbcbcb 46px); flex: none; }
    .list.groups li { height: 15px; color: #888; }
    .list.groups .on { background: #929db0; color: #6d7686; }
    .all { width: 6px; height: 6px; border: 1px solid #333; border-radius: 50%; }
    .hide { width: 22px; padding-left: 6px; display: flex; }
    .key-id { width: 14px; color: #111; }
    .groups .chip { margin-right: 8px; }
    .italic { font-style: italic; }
    .vbar { width: 15px; display: flex; flex-direction: column; background: #aaa; }
    .thumb { background: linear-gradient(90deg, #5c5c5c, #8c8c8c 40%, #5f5f5f); }
    .side .thumb { height: 190px; border-bottom: 1px solid #333; }
    .step { width: 15px; height: 16px; background: linear-gradient(#909090, #666); border: 1px solid #4a4a4a; flex: none; }
    .vbar .space { flex: 1; }
    .az { width: 15px; height: 15px; background: #3a3a3a; color: #ccc; font-weight: 700; font-size: 9px; line-height: 8px; flex: none; }
    .az span:first-child { align-self: flex-start; }
    .az span:last-child { align-self: flex-end; }
    .az.on { border: 1px solid #f0c818; color: #f0c818; }

    .edit { flex: 1; min-width: 0; display: flex; flex-direction: column; }
    .overview { height: 40px; flex: none; display: flex; border: 1px solid #1e1e1e; border-radius: 4px; overflow: hidden; background: #9c9c9c; }
    .overview .picture { flex: 1; min-width: 0; overflow: hidden; }
    .overview .scroll { width: 8px; background: #555; border-left: 1px solid #ddd; margin-top: 7px; padding: 5px 1px; }
    .overview .scroll i { display: block; height: 7px; background: #2c2c2c; border-radius: 3px; }
    .rulers { flex: none; margin-top: 6px; display: flex; flex-direction: column; gap: 1px; }
    .ruler { height: 16px; display: grid; grid-template-columns: 389px 1fr 15px; font-weight: 700; line-height: 16px; }
    .ruler .label { display: flex; align-items: center; justify-content: space-between; background: #434343; color: #b8b8b8; padding: 0 5px 0 30px; }
    .ruler .label.active { background: #78828d; color: #e8e8e8; padding-left: 2px; justify-content: flex-start; gap: 2px; }
    .ruler .label.jump { padding: 0; justify-content: center; }
    .label.active b { margin-left: 1px; }
    .strip { position: relative; overflow: hidden; min-width: 0; }
    .strip.time { background: #78828d; }
    .strip.meter { background: #6b84a8; color: #111; padding-left: 10px; }
    .strip.tail { background: #8c8c8c; }
    .tick { position: absolute; top: 0; bottom: 0; border-left: 1px solid #333; padding-left: 3px; color: #f0f0f0; }
    .playhead { position: absolute; left: 0; top: 0; border: 0; }
    .marker { position: absolute; top: 0; bottom: 0; color: #111; padding-left: 8px; white-space: nowrap; }
    .marker::before { content: ""; position: absolute; left: -4px; top: 4px; width: 7px; height: 7px; background: #f5bf1c; border: 1px solid #604404; transform: rotate(45deg); }

    .workspace { flex: 1; min-height: 0; display: grid; grid-template-columns: 1fr 15px; margin-top: 2px; }
    .tracks { display: flex; flex-direction: column; min-height: 0; min-width: 0; overflow: hidden; }
    .columns { height: 15px; flex: none; display: grid; grid-template-columns: 139px 75px 75px 85px 15px 1fr; font-size: 9px; font-weight: 700; text-align: center; line-height: 14px; }
    .columns > * { background: #525252; margin-right: 2px; height: 14px; }
    .columns .gutter, .columns .ghost { margin: 0; height: 15px; background: linear-gradient(#b0b2b4, #8c8e90); }
    .columns .ghost { background: repeating-linear-gradient(90deg, #0000 0 3px, #7c889455 3px 4px), linear-gradient(#8c8d90, #a3a4a8); border-left: 1px solid #d33; }
    .columns .view { background: #4a5057; display: flex; align-items: center; padding: 0 3px 0 2px; gap: 3px; }
    .view .late { margin-left: auto; }
    .rows { flex: 1; min-height: 0; overflow: hidden; }
    .track { height: 16px; display: grid; grid-template-columns: 374px 15px 1fr; }
    .head { display: grid; grid-template-columns: 13px 41px 50px 35px 75px 75px 85px; padding: 2px 0 1px; background: #393939; border-bottom: 1px solid #2e2e2e; }
    .head > * { height: 13px; }
    .pick { border-radius: 3px; background: var(--pick); }
    .pick i { width: 11px; height: 11px; border-radius: 50%; background: #fff5; border: 1px solid #0005; display: flex; align-items: center; justify-content: center; }
    .plate { margin: 0 1px 0 3px; background: linear-gradient(#a6a6a6, #929292); color: #0a0a0a; font-size: 12px; font-weight: 700; text-align: center; line-height: 14px; border-radius: 1px; overflow: hidden; white-space: nowrap; }
    .states { background: #868686; display: flex; align-items: center; justify-content: flex-end; padding: 0 3px 0 1px; border-radius: 2px; font-weight: 700; color: #f0f0f0; }
    .state { height: 11px; background: #5c5a58; }
    .state.rec { width: 12px; background: #573c3c; border-radius: 3px 0 0 3px; }
    .state.rec i { width: 6px; height: 6px; border-radius: 50%; background: #eee; }
    .state.in { width: 9px; border-right: 1px solid #3c3c3c; }
    .state.solo { width: 11px; }
    .state.mute { width: 13px; background: #8a5020; color: #d5a878; border-radius: 0 2px 2px 0; }
    .state.mute.lit { background: #e0782c; color: #fff; }
    .aux .state.solo { width: 12px; color: #999; background: #666; border-radius: 3px 0 0 3px; }
    .aux .state.mute { background: #444; color: #fff; }
    .state.online { width: 12px; border: 1px solid #ccc; background: #444; border-radius: 3px; }
    .state.online.lit { background: #2a5cb0; }
    .meters { display: flex; gap: 1px; padding: 0 0 1px 3px; align-items: center; }
    .meters i { width: 4px; height: 11px; background: linear-gradient(#240404 50%, #5c4a08 50% 70%, #2f4c0c 70%); }
    .meters.one i { width: 6px; }
    .meters.two i { width: 5px; }
    .slots { display: flex; gap: 4px; padding: 0 4px; align-items: center; background: #343434; margin: 0 2px 0 1px; }
    .slot { width: 10px; height: 10px; border-radius: 2px; background: #444; font-weight: 700; line-height: 10px; color: #111; }
    .slot.set { background: #c8c8c8; }
    .slot.off { background: #1c4a78; color: #fff; }
    .io { display: flex; gap: 3px; align-items: center; padding-left: 4px; }
    .io .slot.dim { background: #444; color: #222; }
    .io .slot.blank { width: 14px; background: #484848; margin-right: 3px; }
    .value { width: 39px; height: 12px; background: #0f1d07; border: 1px solid #0a0f06; color: #8cd01c; font-weight: 700; line-height: 13px; display: flex; justify-content: space-around; padding: 0 3px; }
    .value.text { justify-content: flex-start; padding-left: 4px; }
    .value i { width: 1px; height: 8px; margin-top: 2px; background: #456618; }
    .gutter-cell { background: linear-gradient(90deg, #7c7e80, #acaeb0 60%, #8c8e90); border-bottom: 1px solid #5c5e60; }
    .lane { width: 100%; height: 16px; background: repeating-linear-gradient(90deg, #b9b9bb 0 3px, #abb0b7 3px 4px); }
    .clip-name { font: 700 10px "Liberation Sans", Arial, sans-serif; fill: #fff; }
    .video-name { font: 700 9px "Liberation Sans", Arial, sans-serif; fill: #fff; }
    .workspace .vbar .thumb { flex: 510; }
    .workspace .vbar .space { flex: 190; }
    .ruler-step { height: 21px; background: linear-gradient(90deg, #999, #777); border-bottom: 1px solid #444; flex: none; }

    .bottom { height: 15px; flex: none; display: flex; background: #4a4a4a; }
    .home { width: 389px; padding-left: 3px; display: flex; align-items: center; }
    .hbar { flex: 1; display: flex; background: #aaa; }
    .hbar i { width: 66.5%; background: linear-gradient(#6c6c6c, #8c8c8c 40%, #5c5c5c); border-right: 1px solid #333; }
    .bottom .step { height: 15px; width: 16px; }
    .bottom .step.end { width: 29px; background: none; border: 0; justify-content: flex-start; padding-left: 2px; }
  `;

  private menubar() {
    const menus = ["File", "Edit", "View", "Track", "Clip", "Event", "AudioSuite", "Options", "Setup", "Window", "Marketplace", "Help"];
    return html`<header class="menubar">
      <svg class="icon" width="16" height="18" viewBox="0 0 24 24" aria-hidden="true"><path fill="#222" d="M12.152 6.896c-.948 0-2.415-1.078-3.960-1.040-2.040.027-3.910 1.183-4.961 3.014-2.117 3.675-.546 9.103 1.519 12.090 1.013 1.454 2.208 3.090 3.792 3.039 1.520-.065 2.090-.987 3.935-.987 1.831 0 2.350.987 3.960.948 1.637-.026 2.676-1.480 3.676-2.948 1.156-1.688 1.636-3.325 1.662-3.415-.039-.013-3.182-1.221-3.220-4.857-.026-3.040 2.480-4.494 2.597-4.559-1.429-2.090-3.623-2.324-4.390-2.376-2-.156-3.675 1.090-4.610 1.090zM15.530 3.830c.843-1.012 1.400-2.427 1.245-3.830-1.207.052-2.662.805-3.532 1.818-.780.896-1.454 2.338-1.273 3.714 1.338.104 2.715-.688 3.559-1.701" /></svg>
      <nav class="menus">
        <button class="app">Pro Tools</button>
        ${menus.map((m) => html`<button>${m}</button>`)}
      </nav>
      <div class="status">
        <svg class="icon" width="16" height="16" viewBox="0 0 24 24" aria-hidden="true"><path fill="#222" d="M6 1.807L0 5.629l6 3.822 6.001-3.822L6 1.807zM18 1.807l-6 3.822 6 3.822 6-3.822-6-3.822zM0 13.274l6 3.822 6.001-3.822L6 9.452l-6 3.822zM18 9.452l-6 3.822 6 3.822 6-3.822-6-3.822zM6 18.371l6.001 3.822 6-3.822-6-3.822L6 18.371z" /></svg>
        ${icon(16, 16, svg`<path d="M3 4a6.500 6.500 0 1 1-1 5M3 1v3h3M8.500 4v4.500l3 1.500" fill="none" stroke="#858a98" stroke-width="1.500" />`)}
        ${icon(18, 16, svg`<path d="M0 5h3l5-4v14l-5-4H0z" fill="#222" /><path d="M10 5q2 3 0 6M12 3q4 5 0 10M14.500 1.500q5 6.500 0 13" fill="none" stroke="#222" stroke-width="1.400" />`)}
        ${icon(14, 16, svg`<path d="M4 5l6 6-3 3V2l3 3-6 6" fill="none" stroke="#444" /><circle cx="1.500" cy="8" r="1" fill="#444" /><circle cx="12.500" cy="8" r="1" fill="#444" />`)}
        ${icon(20, 16, svg`<path d="M1 6q9-8 18 0M4 9q6-5 12 0M7 12q3-2.500 6 0" fill="none" stroke="#222" stroke-width="2" /><circle cx="10" cy="14.500" r="1.500" fill="#222" />`)}
        <time class="clock">jue 08:56</time>
        <span>Nacho Arenas</span>
        <button aria-label="Search">${icon(24, 16, svg`<circle cx="15" cy="7" r="4.500" fill="none" stroke="#222" stroke-width="2" /><path d="M18 10.500l4 4" stroke="#222" stroke-width="2.500" />`)}</button>
      </div>
    </header>`;
  }

  private modeCluster() {
    return html`<div class="cluster">
      <div class="tab"></div>
      <div class="lcd modes">
        <button class="mode">SHUFFLE</button><button class="mode">SPOT</button>
        <button class="mode">SLIP</button><button class="mode on">GRID ${down("#0b2a52")}</button>
      </div>
      <div class="tab low"></div>
    </div>`;
  }

  private zoomCluster() {
    const up = icon(7, 4, svg`<path d="M0 4h7L3.500 0z" fill="#222" />`);
    const low = icon(7, 4, svg`<path d="M0 0h7L3.500 4z" fill="#222" />`);
    return html`<div class="cluster padded">
      <div class="row">
        <button class="key arrow" aria-label="Zoom out">${icon(5, 9, svg`<path d="M5 0v9L0 4.500z" fill="#111" />`)}</button>
        <button class="key zoom" aria-label="Audio zoom">${up}${waveIcon("#333", 22, 15)}${low}</button>
        <button class="key zoom" aria-label="MIDI zoom">${up}${icon(20, 13, svg`<path d="M6 1h12v3H6zM1 5h9v3H1zM8 9h11v3H8z" fill="#ccc" stroke="#444" />`)}${low}</button>
        <button class="key arrow" aria-label="Zoom in">${icon(5, 9, svg`<path d="M0 0v9l5-4.500z" fill="#111" />`)}</button>
      </div>
      <div class="rule"></div>
      <div class="row">${[1, 2, 3, 4, 5].map((n) => html`<button class="key preset">${n}</button>`)}</div>
    </div>`;
  }

  private toolCluster() {
    const minis = [
      svg`<path d="M1 8.500h8M15 8.500h8M12.500 4v3M12.500 10v3" stroke="#222" /><path d="M4 6L0 8.500 4 11zM21 6l4 2.500L21 11zM10 5l2.500-3L15 5zM10 12l2.500 3 2.500-3z" fill="#222" />`,
      svg`<path d="M1 7h3V4l5 4-5 4V9H1zM11 7h3V5h1V2h2v3h1v2h7v2h-7v2h-1v3h-2v-3h-1V9h-3z" fill="#222" />`,
      svg`<path d="M.500 6.500h4v4h-4zM16.500 2.500h4v4h-4zM19.500 9.500h4v4h-4z" fill="#cfe0f8" stroke="#123" /><path d="M6 7h4V4l5 4-5 4V9H6z" fill="#111" />`,
      svg`<path d="M3 11L8 5h13" fill="none" stroke="#123" /><circle cx="3" cy="11" r="2" fill="#fff" stroke="#123" /><circle cx="8" cy="4" r="2" fill="#fff" stroke="#123" /><circle cx="20" cy="4" r="2" fill="#fff" stroke="#123" /><path d="M9 10h5V7l5 4-5 4v-3H9z" fill="#111" />`,
      svg`<path d="M3 3v7H1l3 4 2-4H5V3zM9 14V7H7l3-4 2 4h-1v7zM18 3h1v11h-1zM20 3h1v11h-1zM14 7h3v2h-3zM22 7h3v2h-3z" fill="#111" />`,
      svg`<path d="M1 4h10v1H1zM1 8h10v1H1zM1 12h10v1H1zM18 3h1v11h-1zM20 3h1v11h-1zM14 7h3v2h-3zM22 7h3v2h-3z" fill="#111" />`,
      svg`<path d="M3 2h1v2H3zM3 5h1v2H3zM3 9h1v2H3zM3 13h1v2H3zM6 8h3V5l4 3.500L9 12V9H6zM14 3h1v12h-1zM19 3l5 5.500-5 5.500z" fill="#111" />`,
    ];
    const names = ["Zoom toggle", "Tab to transients", "Link timeline and edit selection", "Link track and edit selection", "Mirrored MIDI editing", "Automation follows edit", "Insertion follows playback"];
    return html`<div class="cluster padded">
      <div class="row">
        <button class="key tool" aria-label="Zoomer">${icon(28, 20, svg`<circle cx="9" cy="7" r="6" fill="#f0f0f0" stroke="#222" stroke-width="2" /><path d="M13 11l7 8" stroke="#222" stroke-width="3" /><path d="M20 1q-5 7 5 7M22 4l4 4-4 4" fill="none" stroke="#444" stroke-width="1.500" />`)}${down()}</button>
        <div class="smart">
          <button class="key tool" aria-label="Trim">${icon(26, 18, svg`<path d="M2 1h11v16H2z" fill="#f6f6f6" stroke="#333" /><path d="M12 8H7V5L2 9l5 4v-3h5z" fill="#222" /><path d="M15 8h5V5l5 4-5 4v-3h-5z" fill="#3c4a60" />`)}${down("#111")}</button>
          <button class="key tool" aria-label="Selector">${icon(28, 22, svg`<path d="M8 1h9v20H8z" fill="#111" /><path d="M1 10h1V5h1v4h1V6h1v3h1V7h2v8H6v3H5v-4H4v5H3v-5H2v-2H1zM17 8h1v1h1V6h1v3h1v1h2v1h4v1h-4v1h-2v3h-1v-2h-1v3h-1v-3h-1z" fill="#222" /><path d="M8 9h1V6h1v2h1V3h1v4h1V4h1v4h1V6h1v3h1v4h-1v4h-1v-3h-1v5h-1v-4h-1v5h-1v-5h-1v3H9v-4H8z" fill="#fff" />`)}</button>
          <button class="key tool" aria-label="Grabber">${icon(20, 18, svg`<path d="M6 17L1 10q0-2 3 0l2 2-2-8q1-2 2.500 0l1.500 5-.500-7q1-2 2.500 0l.500 7 1.500-6q2-1 2.500 1l-1 6 3-4q2 0 1.500 2l-4 7-1 2z" fill="#fff" stroke="#345" />`)}${down("#111")}</button>
        </div>
        <button class="key tool" aria-label="Scrubber">${icon(20, 20, svg`<path d="M2 7h4v7H2zM7 6l4-4v17l-4-4z" fill="#555" stroke="#222" /><path d="M13 7q2 3.500 0 7M15 4q4 6 0 12M17.500 2q5 8 0 16" fill="none" stroke="#333" stroke-width="1.500" />`)}</button>
        <button class="key tool" aria-label="Pencil">${icon(20, 18, svg`<path d="M2 17l2-6L13 2q2-2 4 0t0 4L8 14z" fill="#f2f2f2" stroke="#222" /><path d="M2 17l1-3 2 2z" fill="#222" stroke="#222" /><path d="M12 4l3 3" stroke="#222" />`)}${down()}</button>
      </div>
      <div class="rule"></div>
      <div class="minis">${minis.map((m, i) => html`<button class=${classMap({ mini: true, on: i > 1 })} aria-label=${names[i]}>${icon(25, 16, m)}</button>`)}</div>
    </div>`;
  }

  private counterCluster() {
    return html`<div class="cluster">
      <div class="lcd counter">
        <div class="upper">
          <div class="big"><span>00:00:00:00</span>${down("#d8dcc8")}</div>
          <div class="select">
            ${["Start", "End", "Length"].map((n) => html`<span>${n}</span><output>00:00:00:00</output>`)}
          </div>
        </div>
        <div class="lower">
          <span class="name">Cursor</span><span class="pos">00:00:00:00.00</span>
          ${waveIcon("#fff", 18, 12)}
          <span class="samples">7151833</span>
          <div class="row">
            ${icon(17, 12, svg`<rect width="17" height="12" rx="1" fill="#b80f17" /><path d="M1 6h15M4 3v6M7 1v10M9 3v6M12 2v8" stroke="#200" />`)}
            ${icon(9, 11, svg`<path d="M3 0h6v11H0V4z" fill="#c8141c" />`)}
            <span>Dly</span><button class="badge">S</button><button class="badge mute">M</button>
          </div>
        </div>
      </div>
    </div>`;
  }

  private gridCluster() {
    return html`<div class="cluster">
      <div class="tab"></div>
      <div class="lcd grid-box">
        <div><button class="tag">Grid</button><output>00:00:00:01.00</output>${down("#d8dcc8")}</div>
        <div><span class="plain">Nudge</span><output>00:00:00:01.00</output>${down("#d8dcc8")}</div>
      </div>
      <div class="tab low"></div>
    </div>`;
  }

  private transport() {
    return html`<div class="transport">
      <button class="key" aria-label="Online">${icon(14, 14, svg`<circle cx="7" cy="7" r="6.500" fill="#27415c" /><path d="M5 0l3 7 3 5" fill="none" stroke="#ccc" stroke-width="2" />`)}</button>
      <button class="key" aria-label="Stop">${icon(11, 11, svg`<rect width="11" height="11" fill="#1d3d5e" />`)}</button>
      <button class="key" aria-label="Play">${icon(9, 15, svg`<path d="M0 0l9 7.500L0 15z" fill="#2f9a1c" />`)}</button>
      <button class="key" aria-label="Record">${icon(13, 13, svg`<circle cx="6.500" cy="6.500" r="6" fill="#8e1418" />`)}</button>
      <div class="leds"><i class="led"></i><i class="led"></i></div>
      <div class="rule wide"></div><span></span>
      <button class="mini" aria-label="Return to zero">${icon(10, 10, svg`<path d="M1 0h2v10H1zM9 0v10L4 5z" fill="#222" />`)}</button>
      <button class="mini" aria-label="Rewind">${icon(12, 10, svg`<path d="M6 0v10L0 5zM12 0v10L6 5z" fill="#222" />`)}</button>
      <button class="mini" aria-label="Fast forward">${icon(12, 10, svg`<path d="M0 0v10l6-5zM6 0v10l6-5z" fill="#222" />`)}</button>
      <button class="mini" aria-label="Go to end">${icon(10, 10, svg`<path d="M7 0h2v10H7zM1 0v10l5-5z" fill="#222" />`)}</button>
    </div>`;
  }

  private side() {
    const trackIcon = (kind: string) =>
      kind === "film"
        ? icon(9, 9, svg`<path d="M.500.500h8v8h-8zM2.500 0v9M6.500 0v9M0 3.500h9M0 6h9" fill="none" stroke="#444" />`)
        : kind === "bus"
          ? icon(9, 9, svg`<path d="M4 0h2v4h3L4.500 9 0 4h4z" fill="#2c9a14" />`)
          : icon(9, 9, svg`<path d="M0 4h1V2h1V0h1v3h1V2h1v2h4v1H5v2H4V6H3v3H2V7H1V5H0zM6 2h1v5H6z" fill="#444" />`);
    return html`<aside class="side">
      <section class="panel">
        <header class="panel-head"><h2>TRACKS</h2><button class="round" aria-label="Track list menu">${down()}</button></header>
        <div class="panel-body">
          <ul class="list">
            ${SIDE_TRACKS.map(([name, colour, kind]) => html`<li><i class="dot"></i><i class="chip" style=${styleMap({ background: colour })}></i>${trackIcon(kind)}<span>${name}</span></li>`)}
          </ul>
          <div class="vbar">
            <div class="thumb"></div><div class="space"></div>
            <button class="step" aria-label="Scroll up">${icon(7, 5, svg`<path d="M0 5h7L3.500 0z" fill="#eee" />`)}</button>
            <button class="step" aria-label="Scroll down">${down("#eee")}</button>
          </div>
        </div>
      </section>
      <section class="panel fill">
        <header class="panel-head"><h2>GROUPS</h2><button class="round" aria-label="Group list menu">${down()}</button></header>
        <div class="panel-body">
          <ul class="list groups">
            ${MIX_GROUPS.map(
              ([id, name, colour], i) => html`<li class=${classMap({ on: i === 3 || i === 5 })}>
                <span class="hide">${i === 0 ? html`<i class="all"></i>` : nothing}</span>
                <i class="chip" style=${styleMap({ background: colour })}></i><span class="key-id">${id}</span>
                <span class=${classMap({ italic: i === 0 })}>${name}</span>
              </li>`
            )}
          </ul>
          <div class="vbar"><button class="az"><span>a</span><span>z</span></button></div>
        </div>
      </section>
    </aside>`;
  }

  private overviewStrip() {
    const edges = [START, ...MARKERS.map(([x]) => x)];
    return html`<div class="overview">
      <div class="picture">
        <svg width="100%" height="39" aria-hidden="true">
          ${edges.map((x, i) => svg`<rect x=${overviewX(x)} width="100%" height="7" fill=${i ? markerColour(i - 1) : "#b088d8"} />`)}
          <rect y="7" width="100%" height="32" fill="#9c9c9c" />
          <path d="M0 7.500H1800" stroke="#333" />
          ${edges.map((x) => svg`<path transform="translate(${overviewX(x)} 3)" d="M0-3l1 2 2 1-2 1-1 2-1-2-2-1 2-1z" fill="#fbd41c" />`)}
          <g transform="translate(0 8)">${overview()}</g>
        </svg>
      </div>
      <div class="scroll"><i></i></div>
    </div>`;
  }

  private rulers() {
    const ticks = Array.from({ length: 17 }, (_, i) => {
      const minutes = i * 5;
      return `${String(Math.floor(minutes / 60)).padStart(2, "0")}:${String(minutes % 60).padStart(2, "0")}:00:00`;
    });
    return html`<div class="rulers">
      <div class="ruler">
        <div class="label active">
          ${icon(16, 12, svg`<path d="M.500.500h15v11H.500zM0 4h16M0 8h16" fill="none" stroke="#111" /><path d="M1 1h14v3H1z" fill="#222" />`)}${down("#111")}<b>Timecode</b>
        </div>
        <div class="strip time">
          ${ticks.map((t, i) => html`<span class="tick" style=${styleMap({ left: `${Math.round(i * FIVE_MINUTES)}px` })}>${t}</span>`)}
          <svg class="playhead" width="9" height="16" aria-hidden="true"><path d="M0 0h3v5l5 3-5 5-3 3z" fill="#a5c0ee" stroke="#112" /><path d="M.500 0v16" stroke="#e02020" /></svg>
        </div>
        <button class="label jump" aria-label="Jump to top">${icon(10, 12, svg`<path d="M0 0h10v2H0zM5 3l4 4H6v5H4V7H1z" fill="#ddd" />`)}</button>
      </div>
      <div class="ruler"><div class="label"><span>Meter</span><span>+</span></div><div class="strip meter">Default: 4/4</div><div class="strip meter"></div></div>
      <div class="ruler">
        <div class="label"><span>Markers</span><span>+</span></div>
        <div class="strip">
          <span class="marker" style=${styleMap({ left: "1px", right: "0", background: "#b088d8" })}></span>
          ${MARKERS.map(
            ([x, name], i) => html`<span class="marker" style=${styleMap({
              left: `${x - START}px`,
              width: i + 1 < MARKERS.length ? `${MARKERS[i + 1][0] - x}px` : "100%",
              background: markerColour(i),
            })}>${name}</span>`
          )}
        </div>
        <div class="strip tail"></div>
      </div>
    </div>`;
  }

  private slots(letters: string) {
    return html`<div class="slots">
      ${[0, 1, 2, 3, 4].map((i) => {
        const c = letters[i];
        return html`<button class=${classMap({ slot: true, set: !!c, off: c === "q" })} aria-label=${c ? c.toUpperCase() : "Empty"}>${c ? c.toUpperCase() : nothing}</button>`;
      })}
    </div>`;
  }

  private trackRow(track: Track, index: number) {
    const [colour] = GROUPS[track.group];
    const video = track.kind === "video";
    const size = track.channels === 1 ? "one" : track.channels === 2 ? "two" : "six";
    return html`<div class=${classMap({ track: true, [track.kind]: true })}>
      <div class="head">
        <button class="pick" aria-label="Track options" style=${styleMap({ "--pick": colour })}><i>${icon(7, 4, svg`<path d="M0 0h7L3.500 4z" fill="#111a" />`)}</i></button>
        <span class="plate">${track.name}</span>
        <div class="states">
          ${video
            ? html`<button class=${classMap({ state: true, online: true, lit: index === 1 })}>O</button>`
            : track.kind === "aux"
              ? html`<button class="state solo">S</button><button class="state mute">M</button>`
              : html`<button class="state rec" aria-label="Record"><i></i></button><button class="state in">I</button><button class="state solo">S</button><button class=${classMap({ state: true, mute: true, lit: index === 2 })}>M</button>`}
        </div>
        <div class="meters ${size}">
          ${video
            ? html`<svg width="10" height="10" aria-hidden="true"><rect width="10" height="10" rx="2" fill=${index ? "#3a94f0" : "#c8c8c8"} /><path d="M6 2.500A2.500 2.500 0 1 0 7.500 5M5 5L8 2" fill="none" stroke=${index ? "#fff" : "#555"} /></svg>`
            : Array.from({ length: track.channels }, () => html`<i></i>`)}
        </div>
        ${video ? html`<div class="slots"></div><div class="slots"></div>` : html`${this.slots(track.inserts)}${this.slots(track.sends)}`}
        <div class="io">
          ${video
            ? [0, 1, 2, 3].map(() => html`<i class="slot blank"></i>`)
            : html`${[...track.io].map((c) => html`<button class=${classMap({ slot: true, set: c !== "2", dim: c === "2" })}>${c}</button>`)}
                <button class="slot set" aria-label="Fader">${icon(6, 8, svg`<path d="M3 0v8M1 3h4v2H1z" stroke="#666" fill="#999" />`)}</button>
                <span class=${classMap({ value: true, text: track.view === "vol" })}>${track.view ? track.view : track.channels === 2 ? html`<span>v</span><i></i><span>p</span><span>p</span>` : html`<span>v</span><i></i><span>p</span>`}</span>`}
        </div>
      </div>
      <div class="gutter-cell"></div>
      <svg class="lane" height="16">
        <path d=${MARKER_LINES} fill="#e3b43a" />
        <path d="M0 0h1368v1H0z" fill="#dcdcdc" /><path d="M0 15h1368v1H0z" fill="#7e7e7e" />
        ${laneContent(track, index)}
      </svg>
    </div>`;
  }

  render() {
    const left = icon(7, 9, svg`<path d="M6 0v9L1 4.500z" fill="#eee" />`);
    const right = icon(7, 9, svg`<path d="M1 0v9l5-4.500z" fill="#eee" />`);
    const minus = icon(9, 9, svg`<path d="M1 3h7v3H1z" fill="#ddd" />`);
    const plus = icon(9, 9, svg`<path d="M3 1h3v2h2v3H6v2H3V6H1V3h2z" fill="#ddd" />`);
    return html`<div class="desktop">
      <svg class="defs" width="0" height="0" aria-hidden="true">
        <defs><pattern id="grid-teal" width="4" height="16" patternUnits="userSpaceOnUse"><rect x="3" width="1" height="16" fill="#7fb5ab" /></pattern></defs>
      </svg>
      ${this.menubar()}
      <main class="window">
        <div class="titlebar">
          <div class="lights"><button class="light red" aria-label="Close"></button><button class="light amber" aria-label="Minimise"></button><button class="light green" aria-label="Zoom"></button></div>
          <h1 class="title">${icon(12, 15, svg`<rect width="12" height="15" rx="1" fill="#1c1824" /><circle cx="6" cy="6" r="4" fill="#ccc" /><circle cx="6" cy="6" r="2" fill="#403055" /><path d="M1 13h10" stroke="#888" />`)}<span>Edit:   COSTA DA MORTE MIX</span></h1>
          <span></span>
        </div>
        <div class="toolbar">
          ${this.modeCluster()}${this.zoomCluster()}${this.toolCluster()}${this.counterCluster()}${this.gridCluster()}${this.transport()}
          <button class="round" aria-label="Edit window menu">${down()}</button>
        </div>
        <div class="body">
          ${this.side()}
          <section class="edit">
            ${this.overviewStrip()}${this.rulers()}
            <div class="workspace">
              <div class="tracks">
                <div class="columns">
                  <div class="view">${icon(16, 12, svg`<rect width="16" height="12" fill="#eee" /><path d="M6 1h1v10H6zM9 1h1v10H9zM12 1h2v10h-2z" fill="#333" />`)}${down("#eee")}<span class="late">${icon(10, 10, svg`<circle cx="5" cy="5" r="4.500" fill="#28508c" stroke="#101c33" /><path d="M5 2v3l2 2" fill="none" stroke="#ccd" />`)}</span>${down("#eee")}</div>
                  <span>INSERTS A-E</span><span>SENDS A-E</span><span>I / O</span>
                  <div class="gutter"></div><div class="ghost"></div>
                </div>
                <div class="rows">${TRACKS.map((t, i) => this.trackRow(t, i))}</div>
              </div>
              <div class="vbar">
                <button class="az on"><span>a</span><span>z</span></button>
                <button class="ruler-step" aria-label="Audio zoom">${waveIcon("#333", 12, 9)}</button>
                <button class="ruler-step" aria-label="MIDI zoom">${icon(10, 8, svg`<path d="M0 1h5v3H0zM5 4h5v3H5z" fill="#444" />`)}</button>
                <div class="thumb"></div><div class="space"></div>
                <button class="step" aria-label="Scroll up">${icon(7, 5, svg`<path d="M0 5h7L3.500 0z" fill="#eee" />`)}</button>
                <button class="step" aria-label="Scroll down">${down("#eee")}</button>
                <button class="step" aria-label="Shorter tracks">${minus}</button>
                <button class="step" aria-label="Taller tracks">${plus}</button>
              </div>
            </div>
            <div class="bottom">
              <div class="home">${icon(11, 10, svg`<path d="M0 0h1v10H0zM2 5l5-4v3h4v2H7v3z" fill="#ddd" />`)}</div>
              <div class="hbar"><i></i></div>
              <button class="step" aria-label="Scroll left">${left}</button><button class="step" aria-label="Scroll right">${right}</button>
              <button class="step" aria-label="Zoom out">${minus}</button><button class="step" aria-label="Zoom in">${plus}</button>
              <button class="step end" aria-label="Go to end">${icon(11, 10, svg`<path d="M10 0h1v10h-1zM0 5l5-4v3h4v2H5v3z" fill="#ddd" />`)}</button>
            </div>
          </section>
        </div>
      </main>
    </div>`;
  }
}
